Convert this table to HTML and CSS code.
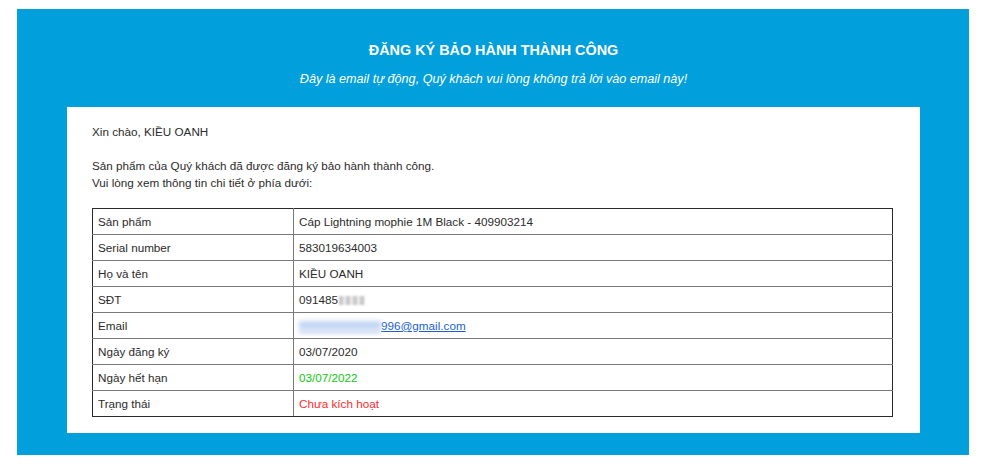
FILE: index.html
```html
<!DOCTYPE html>
<html lang="vi">
<head>
<meta charset="utf-8">
<title>Đăng ký bảo hành thành công</title>
<link rel="stylesheet" href="styles.css">
</head>
<body>
<div class="mail">
  <div class="head">
    <h1 class="title">ĐĂNG KÝ BẢO HÀNH THÀNH CÔNG</h1>
    <p class="sub">Đây là email tự động, Quý khách vui lòng không trả lời vào email này!</p>
  </div>
  <div class="card">
    <p class="txt">Xin chào, KIỀU OANH</p>
    <p class="txt gap">Sản phẩm của Quý khách đã được đăng ký bảo hành thành công.<br>Vui lòng xem thông tin chi tiết ở phía dưới:</p>
    <table class="info">
      <tr><td class="k">Sản phẩm</td><td>Cáp Lightning mophie 1M Black - 409903214</td></tr>
      <tr><td class="k">Serial number</td><td>583019634003</td></tr>
      <tr><td class="k">Họ và tên</td><td>KIỀU OANH</td></tr>
      <tr><td class="k">SĐT</td><td>091485<span class="blur-ph"></span></td></tr>
      <tr><td class="k">Email</td><td><a class="link" href="#"><span class="blur-em"></span>996@gmail.com</a></td></tr>
      <tr><td class="k">Ngày đăng ký</td><td>03/07/2020</td></tr>
      <tr><td class="k">Ngày hết hạn</td><td class="green">03/07/2022</td></tr>
      <tr><td class="k">Trạng thái</td><td class="red">Chưa kích hoạt</td></tr>
    </table>
  </div>
</div>
</body>
</html>
```
FILE: styles.css
```css
html, body { margin: 0; padding: 0; background: #fff; }
body { padding: 9px 0 0 17px; }
.mail {
  width: 952px;
  background: #019fdb;
  padding: 0 49px 22px 50px;
  box-sizing: border-box;
}
.head { padding-top: 32px; height: 98px; box-sizing: border-box; text-align: center; color: #fff; font-family: "Liberation Sans", Arial, sans-serif; }
.title { margin: 0; font-size: 14.4px; font-weight: bold; line-height: 18px; }
.sub { margin: 11px 0 0; font-size: 12.6px; font-style: italic; line-height: 18px; }
.card {
  background: #fff;
  padding: 16px 27px 16px 25px;
  font-family: "Liberation Sans", Arial, sans-serif;
  font-size: 11.7px;
  line-height: 17px;
  color: #2b2b2b;
}
.txt { margin: 0; }
.gap { margin: 17px 0 17px; }
.info { width: 100%; border-collapse: collapse; border: 1px solid #2a2a2a; }
.info td { border: 1px solid #7a7a7a; padding: 4px 5px; line-height: 17px; vertical-align: middle; }
.info tr:first-child td { border-top-color: #2a2a2a; }
.info tr:last-child td { border-bottom-color: #2a2a2a; }
.info td:first-child { border-left-color: #2a2a2a; }
.info td:last-child { border-right-color: #2a2a2a; }
.info td.k { width: 190px; }
.green { color: #10c810; }
.red { color: #ff2a2a; }
.link { color: #1a5fd3; text-decoration: underline; }
.blur-ph {
  display: inline-block; width: 26px; height: 9px; margin-left: 1px; vertical-align: -1px;
  background: repeating-linear-gradient(90deg, #c8c8c8 0 4px, #ececec 4px 7px);
  filter: blur(1.3px);
}
.blur-em {
  display: inline-block; width: 82px; height: 12px; vertical-align: -3px;
  background: linear-gradient(180deg, #c3d6f4 0 8px, #fff 8px 10px, #a3bfec 10px 12px);
  filter: blur(2px);
}
```
